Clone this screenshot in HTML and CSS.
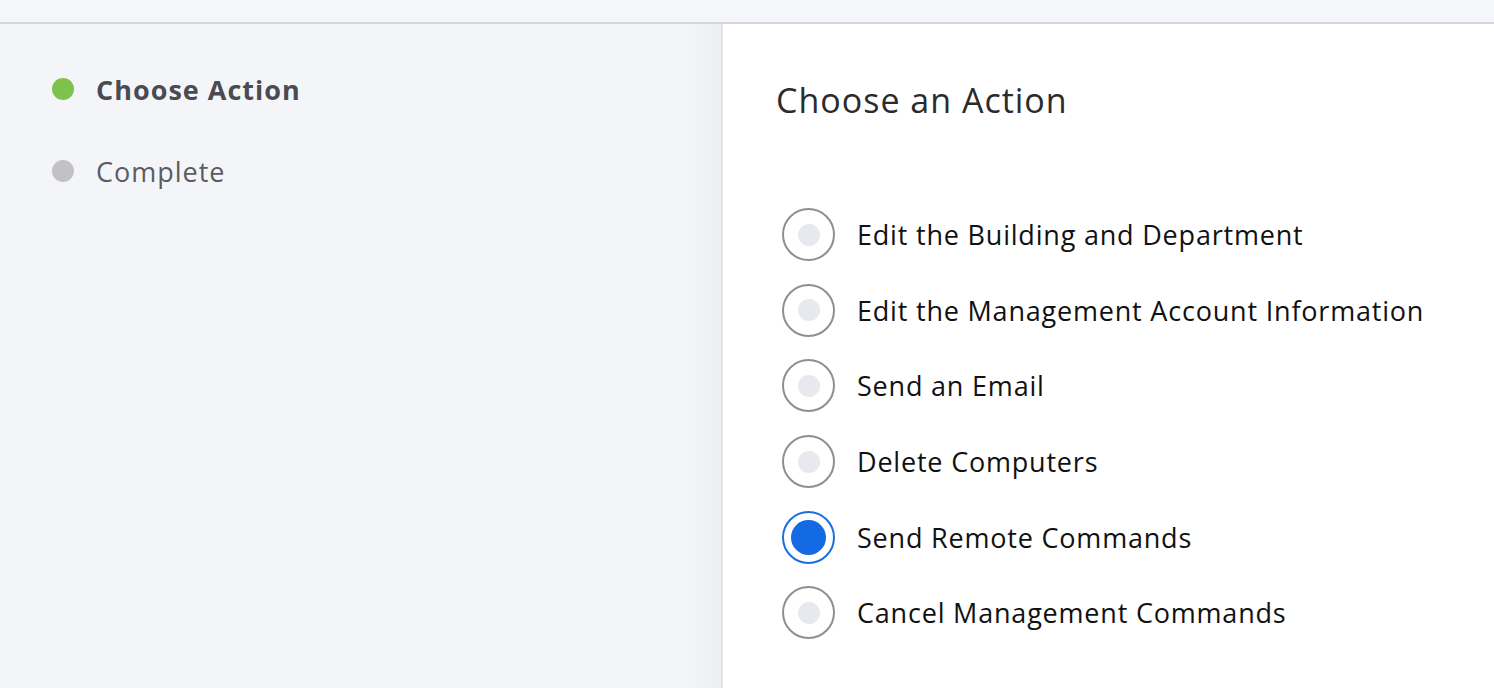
FILE: index.html
```html
<!DOCTYPE html>
<html lang="en">
<head>
    <meta charset="UTF-8">
    <meta name="viewport" content="width=device-width, initial-scale=1.0">
    <title>Mass Action</title>
    <link rel="stylesheet" href="styles.css">
</head>
<body>
    <div class="topbar"></div>
    <div class="main">
        <aside class="sidebar">
            <ul class="steps">
                <li class="step active"><span class="dot"></span>Choose Action</li>
                <li class="step"><span class="dot"></span>Complete</li>
            </ul>
        </aside>
        <section class="panel">
            <h2>Choose an Action</h2>
            <form class="actions">
                <label class="option"><input type="radio" name="action"><span class="radio"></span>Edit the Building and Department</label>
                <label class="option"><input type="radio" name="action"><span class="radio"></span>Edit the Management Account Information</label>
                <label class="option"><input type="radio" name="action"><span class="radio"></span>Send an Email</label>
                <label class="option"><input type="radio" name="action"><span class="radio"></span>Delete Computers</label>
                <label class="option"><input type="radio" name="action" checked><span class="radio"></span>Send Remote Commands</label>
                <label class="option"><input type="radio" name="action"><span class="radio"></span>Cancel Management Commands</label>
            </form>
        </section>
    </div>
</body>
</html>
```

FILE: styles.css
```css
* {
    box-sizing: border-box;
}
html, body {
    height: 100%;
}
body {
    margin: 0;
    font-family: "Open Sans", "Liberation Sans", sans-serif;
    background-color: #f4f5f9;
    display: flex;
    flex-direction: column;
    overflow: hidden;
}
.topbar {
    height: 24px;
    flex: none;
    background-color: #f5f6fa;
    border-bottom: 2px solid #d5d6db;
}
.main {
    flex: 1;
    display: flex;
}
.sidebar {
    width: 723px;
    flex: none;
    background: linear-gradient(to right, #f4f5f9 680px, #eeeff3 721px);
    border-right: 2px solid #e2e3e7;
    padding-top: 24px;
}
.steps {
    list-style: none;
    margin: 0;
    padding: 0 0 0 52px;
}
.step {
    display: flex;
    align-items: center;
    height: 82px;
    font-size: 27px;
    letter-spacing: 1px;
    color: #5b5c63;
}
.step .dot {
    width: 22px;
    height: 22px;
    border-radius: 50%;
    background-color: #c2c2c4;
    margin-right: 22px;
}
.step.active {
    font-weight: bold;
    color: #4a4b52;
}
.step.active .dot {
    background-color: #7dc24b;
}
.panel {
    flex: 1;
    background: white;
    padding: 56px 0 0 53px;
}
h2 {
    margin: 0;
    font-size: 34px;
    font-weight: normal;
    line-height: 40px;
    letter-spacing: 1px;
    color: #2b2b2d;
}
.actions {
    margin-top: 77px;
}
.option {
    display: flex;
    align-items: center;
    height: 75.6px;
    padding-left: 6px;
    font-size: 27px;
    letter-spacing: 0.8px;
    color: #111;
    cursor: pointer;
}
.option input {
    display: none;
}
.radio {
    width: 53px;
    height: 53px;
    border-radius: 50%;
    border: 2px solid #8e8e93;
    margin-right: 22px;
    display: flex;
    align-items: center;
    justify-content: center;
}
.radio::after {
    content: "";
    width: 22px;
    height: 22px;
    border-radius: 50%;
    background-color: #e8e9ee;
}
.option input:checked + .radio {
    border-color: #1a6fe0;
}
.option input:checked + .radio::after {
    width: 35px;
    height: 35px;
    background-color: #136ae3;
}
```
